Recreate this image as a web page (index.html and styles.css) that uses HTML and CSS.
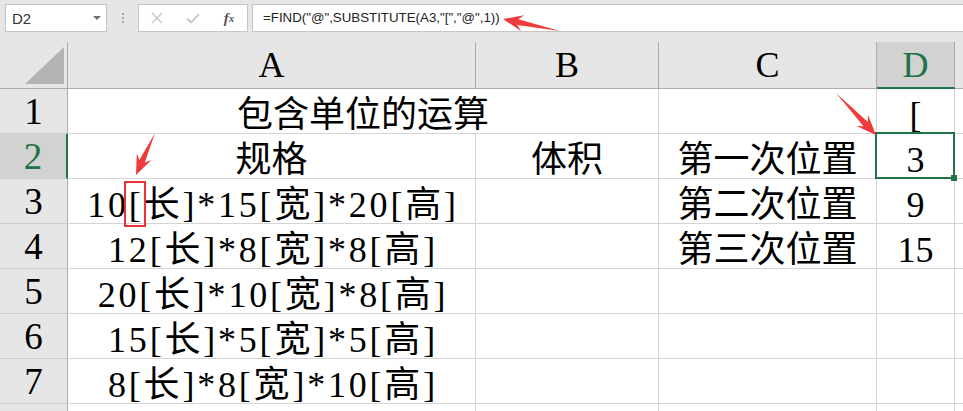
FILE: index.html
```html
<!DOCTYPE html>
<html lang="zh-CN">
<head>
    <meta charset="UTF-8">
    <title>包含单位的运算</title>
    <link rel="stylesheet" href="styles.css">
</head>
<body>

<div class="app">
    <!-- 编辑栏 -->
    <div class="formula-bar">
        <div class="name-box">
            <span>D2</span>
            <span class="caret"></span>
        </div>
        <div class="grip"><i></i><i></i><i></i></div>
        <div class="fx-buttons">
            <span class="fx-btn">
                <svg width="12" height="12" viewBox="0 0 12 12"><path d="M1 1 L11 11 M11 1 L1 11" stroke="#c3c3c3" stroke-width="1.3" fill="none"/></svg>
            </span>
            <span class="fx-btn">
                <svg width="14" height="11" viewBox="0 0 14 11"><path d="M1 5.5 L5 9.5 L13 1" stroke="#c3c3c3" stroke-width="1.8" fill="none"/></svg>
            </span>
            <span class="fx-btn fx">f<small>x</small></span>
        </div>
        <div class="formula-input">=FIND("@",SUBSTITUTE(A3,"[","@",1))</div>
    </div>

    <!-- 工作表 -->
    <div class="sheet">
        <div class="corner"><span class="corner-tri"></span></div>
        <div class="col-head">A</div>
        <div class="col-head">B</div>
        <div class="col-head">C</div>
        <div class="col-head active">D</div>
        <div class="col-head last"></div>

        <div class="row-head">1</div>
        <div class="cell span-2">包含单位的运算</div>
        <div class="cell"></div>
        <div class="cell">[</div>
        <div class="cell last"></div>

        <div class="row-head active">2</div>
        <div class="cell">规格</div>
        <div class="cell">体积</div>
        <div class="cell">第一次位置</div>
        <div class="cell selected">3</div>
        <div class="cell last"></div>

        <div class="row-head">3</div>
        <div class="cell spec">10<span class="mark">[</span>长]*15[宽]*20[高]</div>
        <div class="cell"></div>
        <div class="cell">第二次位置</div>
        <div class="cell">9</div>
        <div class="cell last"></div>

        <div class="row-head">4</div>
        <div class="cell spec">12[长]*8[宽]*8[高]</div>
        <div class="cell"></div>
        <div class="cell">第三次位置</div>
        <div class="cell">15</div>
        <div class="cell last"></div>

        <div class="row-head">5</div>
        <div class="cell spec">20[长]*10[宽]*8[高]</div>
        <div class="cell"></div>
        <div class="cell"></div>
        <div class="cell"></div>
        <div class="cell last"></div>

        <div class="row-head">6</div>
        <div class="cell spec">15[长]*5[宽]*5[高]</div>
        <div class="cell"></div>
        <div class="cell"></div>
        <div class="cell"></div>
        <div class="cell last"></div>

        <div class="row-head">7</div>
        <div class="cell spec">8[长]*8[宽]*10[高]</div>
        <div class="cell"></div>
        <div class="cell"></div>
        <div class="cell"></div>
        <div class="cell last"></div>

        <!-- 第 8 行只露出顶部 -->
        <div class="row-head"></div>
        <div class="cell"></div>
        <div class="cell"></div>
        <div class="cell"></div>
        <div class="cell"></div>
        <div class="cell last"></div>
    </div>

    <!-- 标注箭头 -->
    <svg class="arrows" width="963" height="411" viewBox="0 0 963 411">
        <polygon points="503,19 524.2,15.3 518.3,19.2 560,31 517.1,25 521,30.9"/>
        <polygon points="876,135 856.4,126 863.5,126.2 836,93 867.9,122.1 868,115"/>
        <polygon points="136,175 136.8,153.5 139.4,160.1 155,133 144.8,162.5 151.4,159.9"/>
    </svg>
</div>

</body>
</html>
```

FILE: styles.css
```css
* {
    box-sizing: border-box;
}
body {
    margin: 0;
    background-color: #fff;
    color: #000;
    font-family: "Liberation Serif", "Noto Sans CJK SC", serif;
}
.app {
    position: relative;
    width: 963px;
    height: 411px;
    overflow: hidden;
}

/* 编辑栏 */
.formula-bar {
    display: flex;
    align-items: flex-start;
    height: 42px;
    padding: 4px 0 0 5px;
    background-color: #e6e6e6;
}
.name-box {
    display: flex;
    align-items: center;
    justify-content: space-between;
    width: 102px;
    height: 28px;
    padding: 0 5px 0 6px;
    background-color: #fff;
    border: 1px solid #c6c6c6;
    font: 15px "Liberation Sans", sans-serif;
    color: #333;
}
.caret {
    width: 0;
    height: 0;
    border-left: 4px solid transparent;
    border-right: 4px solid transparent;
    border-top: 4px solid #6f6f6f;
}
.grip {
    display: flex;
    flex-direction: column;
    align-items: center;
    gap: 2px;
    width: 31px;
    padding-top: 9px;
}
.grip i {
    width: 2px;
    height: 2px;
    background-color: #a8a8a8;
}
.fx-buttons {
    display: flex;
    width: 110px;
    height: 28px;
    background-color: #fff;
    border: 1px solid #c6c6c6;
}
.fx-btn {
    display: flex;
    align-items: center;
    justify-content: center;
    width: 36px;
}
.fx {
    font: italic bold 15px "Liberation Serif", serif;
    color: #555;
}
.fx small {
    font-size: 11px;
}
.formula-input {
    flex: 1;
    height: 28px;
    margin-left: 4px;
    padding-left: 10px;
    background-color: #fff;
    border: 1px solid #c6c6c6;
    border-right: none;
    font: 13.3px/26px "Liberation Sans", sans-serif;
    color: #222;
    white-space: nowrap;
}

/* 工作表 */
.sheet {
    display: grid;
    grid-template-columns: 68px 408px 183px 218px 78px 1fr;
    grid-template-rows: 47px repeat(8, 45px);
}
.corner {
    display: flex;
    align-items: flex-end;
    justify-content: flex-end;
    padding: 0 3px 4px 0;
    background-color: #e6e6e6;
    border-right: 1px solid #ababab;
    border-bottom: 1px solid #ababab;
}
.corner-tri {
    width: 0;
    height: 0;
    border-left: 39px solid transparent;
    border-bottom: 37px solid #b4b4b4;
}
.col-head {
    display: flex;
    align-items: center;
    justify-content: center;
    background-color: #e6e6e6;
    border-right: 1px solid #ababab;
    border-bottom: 1px solid #ababab;
    font-size: 36px;
    line-height: 1;
}
.col-head.active {
    background-color: #d2d2d2;
    color: #217346;
    border-bottom: 2px solid #217346;
}
.row-head {
    display: flex;
    align-items: center;
    justify-content: center;
    background-color: #e6e6e6;
    border-right: 1px solid #ababab;
    border-bottom: 1px solid #cdcdcd;
    font-size: 37px;
    line-height: 1;
}
.row-head.active {
    background-color: #d2d2d2;
    color: #217346;
    border-right: 2px solid #217346;
}
.cell {
    display: flex;
    align-items: flex-end;
    justify-content: center;
    border-right: 1px solid #d4d4d4;
    border-bottom: 1px solid #d4d4d4;
    font-size: 36px;
    line-height: 1;
    white-space: nowrap;
}
.spec {
    letter-spacing: 2.8px;
    padding-left: 3px;
}
.span-2 {
    grid-column: span 2;
}
.last {
    border-right: none;
}
.cell.selected {
    position: relative;
}
.cell.selected::after {
    content: "";
    position: absolute;
    top: -2px;
    left: -2px;
    right: -1px;
    bottom: -1px;
    border: 2px solid #217346;
}
.cell.selected::before {
    content: "";
    position: absolute;
    right: -3px;
    bottom: -3px;
    width: 6px;
    height: 6px;
    background-color: #217346;
    z-index: 1;
}
.mark {
    position: relative;
}
.mark::after {
    content: "";
    position: absolute;
    top: -6px;
    bottom: -4px;
    left: -5px;
    right: -2px;
    border: 2px solid #e8333a;
}

/* 标注箭头 */
.arrows {
    position: absolute;
    top: 0;
    left: 0;
    pointer-events: none;
}
.arrows polygon {
    fill: #ef3b3b;
}
```
